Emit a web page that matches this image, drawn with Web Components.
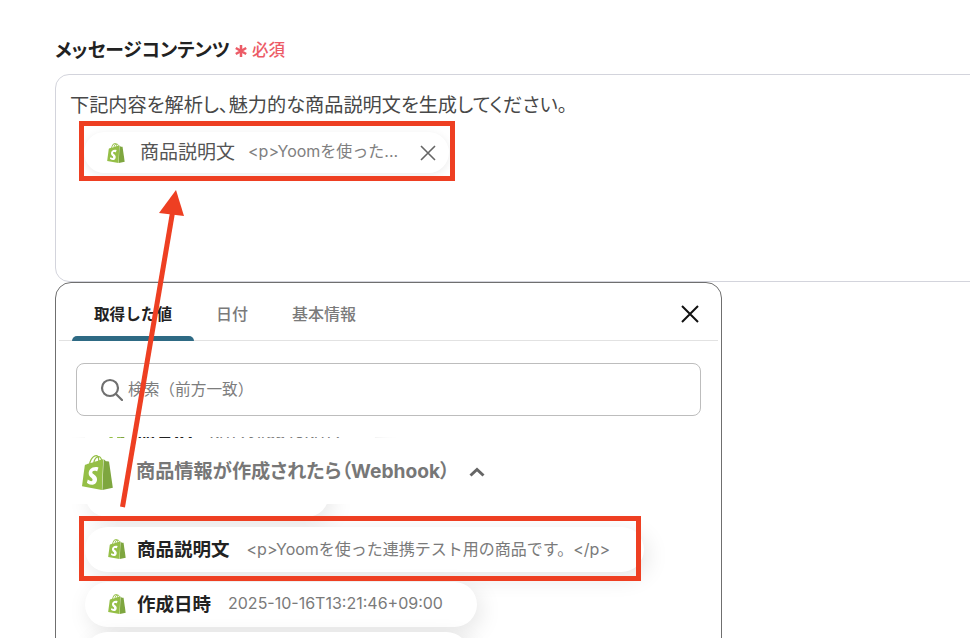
<!DOCTYPE html>
<html lang="ja">
<head>
<meta charset="utf-8">
<title>メッセージコンテンツ</title>
<style>
  html, body { margin: 0; background: #fff; }
  body {
    position: relative;
    width: 970px;
    height: 638px;
    overflow: hidden;
    font-family: Inter, "Noto Sans CJK JP", sans-serif;
  }
</style>
</head>
<body>
  <message-field>
    <token-pill label="商品説明文" value="&lt;p&gt;Yoomを使った..."></token-pill>
  </message-field>
  <value-panel>
    <value-row label="商品ID" value="90123456789012"></value-row>
    <value-row label="商品名" value="901234567"></value-row>
    <value-row label="商品説明文" value="&lt;p&gt;Yoomを使った連携テスト用の商品です。&lt;/p&gt;"></value-row>
    <value-row label="作成日時" value="2025-10-16T13:21:46+09:00"></value-row>
    <value-row class="last"></value-row>
  </value-panel>
  <red-arrow></red-arrow>
  <red-frame style="left:79px;top:121px;width:376px;height:60px"></red-frame>
  <red-frame style="left:79px;top:516px;width:562px;height:65px"></red-frame>

<script>
const SHOPIFY_BODY = 'M11.71 11.305s-.81-.424-1.774-.424c-1.447 0-1.504.906-1.504 1.141 0 1.232 3.24 1.715 3.24 4.629 0 2.295-1.44 3.76-3.406 3.76-2.354 0-3.54-1.465-3.54-1.465l.646-2.086s1.245 1.066 2.28 1.066c.675 0 .975-.545.975-.932 0-1.619-2.654-1.694-2.654-4.359-.034-2.237 1.571-4.416 4.827-4.416 1.257 0 1.875.361 1.875.361l-.945 2.715-.02.01zM11.17.83c.136 0 .271.038.405.135-.984.465-2.064 1.639-2.508 3.992-.656.213-1.293.405-1.889.578C7.697 3.75 8.951.84 11.17.84V.83zm1.235 2.949v.135c-.754.232-1.583.484-2.394.736.466-1.777 1.333-2.645 2.085-2.971.193.501.309 1.176.309 2.1zm.539-2.234c.694.074 1.141.867 1.429 1.755-.349.114-.735.231-1.158.366v-.252c0-.752-.096-1.371-.271-1.871v.002zm2.992 1.289c-.02 0-.06.021-.078.021s-.289.075-.714.21c-.423-1.233-1.176-2.37-2.508-2.37h-.115C12.135.209 11.669 0 11.265 0 8.159 0 6.675 3.877 6.21 5.846c-1.194.365-2.063.636-2.16.674-.675.213-.694.232-.772.87-.075.462-1.83 14.063-1.83 14.063L15.009 24l.927-21.166z';
const SHOPIFY_SIDE = 'M15.337 23.979l7.216-1.561s-2.604-17.613-2.625-17.73c-.018-.116-.114-.192-.211-.192s-1.929-.136-1.929-.136-1.275-1.274-1.439-1.411c-.045-.037-.075-.057-.121-.074l-.914 21.104h.023z';

class ShopifyIcon extends HTMLElement {
  connectedCallback() {
    const size = this.getAttribute('size') || 20;
    this.attachShadow({ mode: 'open' });
    this.shadowRoot.innerHTML = `
      <style>
        :host { display: block; flex: none; width: ${size}px; height: ${size}px; }
        svg { display: block; width: 100%; height: 100%; }
      </style>
      <svg viewBox="0 0 24 24">
        <rect x="4" y="9" width="9" height="13" fill="#fff"/>
        <path fill="#7ea63f" d="${SHOPIFY_SIDE}"/>
        <path fill="#95bf47" d="${SHOPIFY_BODY}"/>
      </svg>
    `;
  }
}
customElements.define('shopify-icon', ShopifyIcon);

class MessageField extends HTMLElement {
  connectedCallback() {
    this.attachShadow({ mode: 'open' });
    this.shadowRoot.innerHTML = `
      <style>
        :host { display: block; padding: 37px 0 0 55px; }
        .label {
          display: flex;
          align-items: center;
          height: 24px;
          font-size: 18.8px;
          font-weight: 700;
          color: #222;
          margin-bottom: 13px;
          font-feature-settings: "palt";
        }
        .label > span:first-child { margin-top: -1px; }
        .req {
          display: flex;
          align-items: center;
          gap: 5px;
          margin-left: 5px;
          font-size: 16.5px;
          font-weight: 500;
          color: #ec5b66;
        }
        .req svg { width: 12px; height: 12px; margin-top: 4px; }
        .box {
          box-sizing: border-box;
          width: 960px;
          height: 208px;
          padding: 18px 14px;
          border: 1px solid #d3d4dc;
          border-radius: 14px;
          background: #fff;
        }
        .text {
          font-size: 19.2px;
          line-height: 24px;
          color: #484848;
          font-feature-settings: "palt";
          margin-bottom: 15px;
        }
      </style>
      <div class="label"><span>メッセージコンテンツ</span>
        <span class="req">
          <svg viewBox="0 0 12 12" fill="none" stroke="#ec5b66" stroke-width="2.5">
            <path d="M6 0v12M.8 3l10.4 6M11.2 3L.8 9"/>
          </svg>
          必須
        </span>
      </div>
      <div class="box">
        <div class="text">下記内容を解析し、魅力的な商品説明文を生成してください。</div>
        <slot></slot>
      </div>
    `;
  }
}
customElements.define('message-field', MessageField);

class TokenPill extends HTMLElement {
  connectedCallback() {
    this.attachShadow({ mode: 'open' });
    this.shadowRoot.innerHTML = `
      <style>
        :host {
          box-sizing: border-box;
          display: flex;
          align-items: center;
          width: 365px;
          height: 41px;
          margin-left: 14px;
          padding: 0 13px 0 22px;
          border-radius: 21px;
          background: #fff;
          box-shadow: 0 2px 8px rgba(0, 0, 0, .08);
        }
        .name { margin: 0 0 5px 14px; font-size: 19px; color: #555; }
        .val { margin: 0 0 5px 13px; font-size: 16px; color: #808080; flex: 1; white-space: nowrap; }
        svg { width: 16px; height: 16px; }
      </style>
      <shopify-icon size="20"></shopify-icon>
      <span class="name">${this.getAttribute('label')}</span>
      <span class="val"></span>
      <svg viewBox="0 0 16 16" fill="none" stroke="#666" stroke-width="1.6"><path d="M1 1l14 14M15 1L1 15"/></svg>
    `;
    this.shadowRoot.querySelector('.val').textContent = this.getAttribute('value');
  }
}
customElements.define('token-pill', TokenPill);

class ValuePanel extends HTMLElement {
  connectedCallback() {
    this.attachShadow({ mode: 'open' });
    this.shadowRoot.innerHTML = `
      <style>
        :host {
          box-sizing: border-box;
          display: flex;
          flex-direction: column;
          width: 667px;
          height: 420px;
          margin-left: 55px;
          border: 1px solid #6f6f6f;
          border-radius: 16px;
          background: #fff;
        }
        .tabs {
          box-sizing: border-box;
          display: flex;
          align-items: stretch;
          height: 58px;
          margin: 0 3px;
          padding-left: 13px;
          border-bottom: 1px solid #e2e2e2;
          font-size: 16px;
          font-weight: 500;
          color: #7a7a7a;
        }
        .tab { position: relative; display: flex; align-items: center; padding: 3px 22px 0; }
        .tab.on { color: #222; font-weight: 700; font-size: 15.6px; }
        .tab.on::after {
          content: "";
          position: absolute;
          left: 0;
          right: 0;
          bottom: -1px;
          height: 5px;
          border-radius: 5px 5px 0 0;
          background: #2e6a84;
        }
        .close { margin-left: auto; align-self: center; margin-right: 19px; width: 18px; height: 18px; margin-top: 4px; }
        .search {
          box-sizing: border-box;
          display: flex;
          align-items: center;
          gap: 5px;
          height: 53px;
          margin: 22px 20px 21px;
          padding-left: 23px;
          border: 1px solid #bdbdbd;
          border-radius: 8px;
          font-size: 15.7px;
          color: #7d7d7d;
        }
        .search span { margin-bottom: 3px; }
        .search svg { width: 23px; height: 23px; flex: none; }
        .list {
          position: relative;
          flex: 1;
          min-height: 0;
          overflow: hidden;
          padding-left: 29px;
          display: flex;
          flex-direction: column;
          align-items: flex-start;
          gap: 10px;
        }
        .list::before { content: ""; display: block; flex: none; margin-top: -30px; }
        .head {
          box-sizing: border-box;
          position: absolute;
          top: 1px;
          left: 0;
          right: 0;
          height: 66px;
          display: flex;
          align-items: center;
          padding: 2px 0 0 24px;
          background: #fff;
          font-size: 19.2px;
          font-weight: 700;
          color: #777;
          font-feature-settings: "palt";
        }
        .head span { margin: 0 0 4px 21px; }
        .head svg { width: 16px; height: 10px; margin-left: 19px; margin-top: -1px; }
      </style>
      <div class="tabs">
        <div class="tab on">取得した値</div>
        <div class="tab">日付</div>
        <div class="tab">基本情報</div>
        <svg class="close" viewBox="0 0 18 18" fill="none" stroke="#111" stroke-width="2"><path d="M1 1l16 16M17 1L1 17"/></svg>
      </div>
      <div class="search">
        <svg viewBox="0 0 23 23" fill="none" stroke="#6f6f6f" stroke-width="2.2">
          <circle cx="10" cy="10" r="8"/><path d="M16 16l6 6" stroke-linecap="round"/>
        </svg>
        <span>検索（前方一致）</span>
      </div>
      <div class="list">
        <slot></slot>
        <div class="head">
          <shopify-icon size="35"></shopify-icon>
          <span>商品情報が作成されたら（Webhook）</span>
          <svg viewBox="0 0 16 10" fill="none" stroke="#666" stroke-width="3"><path d="M1.5 8.5L8 2.5l6.5 6"/></svg>
        </div>
      </div>
    `;
  }
}
customElements.define('value-panel', ValuePanel);

class ValueRow extends HTMLElement {
  connectedCallback() {
    this.attachShadow({ mode: 'open' });
    const label = this.getAttribute('label');
    this.shadowRoot.innerHTML = `
      <style>
        :host {
          box-sizing: border-box;
          flex: none;
          display: flex;
          align-items: center;
          height: 45px;
          padding: 0 34px 2px 22px;
          border-radius: 23px;
          background: #fff;
          box-shadow: 4px 6px 22px rgba(0, 0, 0, .1);
          white-space: nowrap;
        }
        :host(.last) { width: 384px; margin-top: -5px; }
        .name { margin: 0 0 2px 10px; font-size: 18.5px; font-weight: 700; color: #222; }
        .val { margin: 0 0 2px 17px; font-size: 16px; color: #7a7a7a; }
      </style>
      ${label ? `
        <shopify-icon size="20"></shopify-icon>
        <span class="name">${label}</span>
        <span class="val"></span>` : ''}
    `;
    if (label) this.shadowRoot.querySelector('.val').textContent = this.getAttribute('value');
  }
}
customElements.define('value-row', ValueRow);

class RedFrame extends HTMLElement {
  connectedCallback() {
    this.attachShadow({ mode: 'open' });
    this.shadowRoot.innerHTML = `
      <style>
        :host {
          position: absolute;
          box-sizing: border-box;
          border: 5px solid #ee3f22;
          pointer-events: none;
        }
      </style>
    `;
  }
}
customElements.define('red-frame', RedFrame);

class RedArrow extends HTMLElement {
  connectedCallback() {
    this.attachShadow({ mode: 'open' });
    this.shadowRoot.innerHTML = `
      <style>
        :host { position: absolute; left: 0; top: 0; width: 970px; height: 638px; pointer-events: none; }
        svg { display: block; }
      </style>
      <svg width="970" height="638" viewBox="0 0 970 638">
        <path d="M122.5 507L172.6 212" stroke="#ee3f22" stroke-width="5" fill="none"/>
        <path d="M176 190L159 213L184 216z" fill="#ee3f22"/>
      </svg>
    `;
  }
}
customElements.define('red-arrow', RedArrow);
</script>
</body>
</html>
